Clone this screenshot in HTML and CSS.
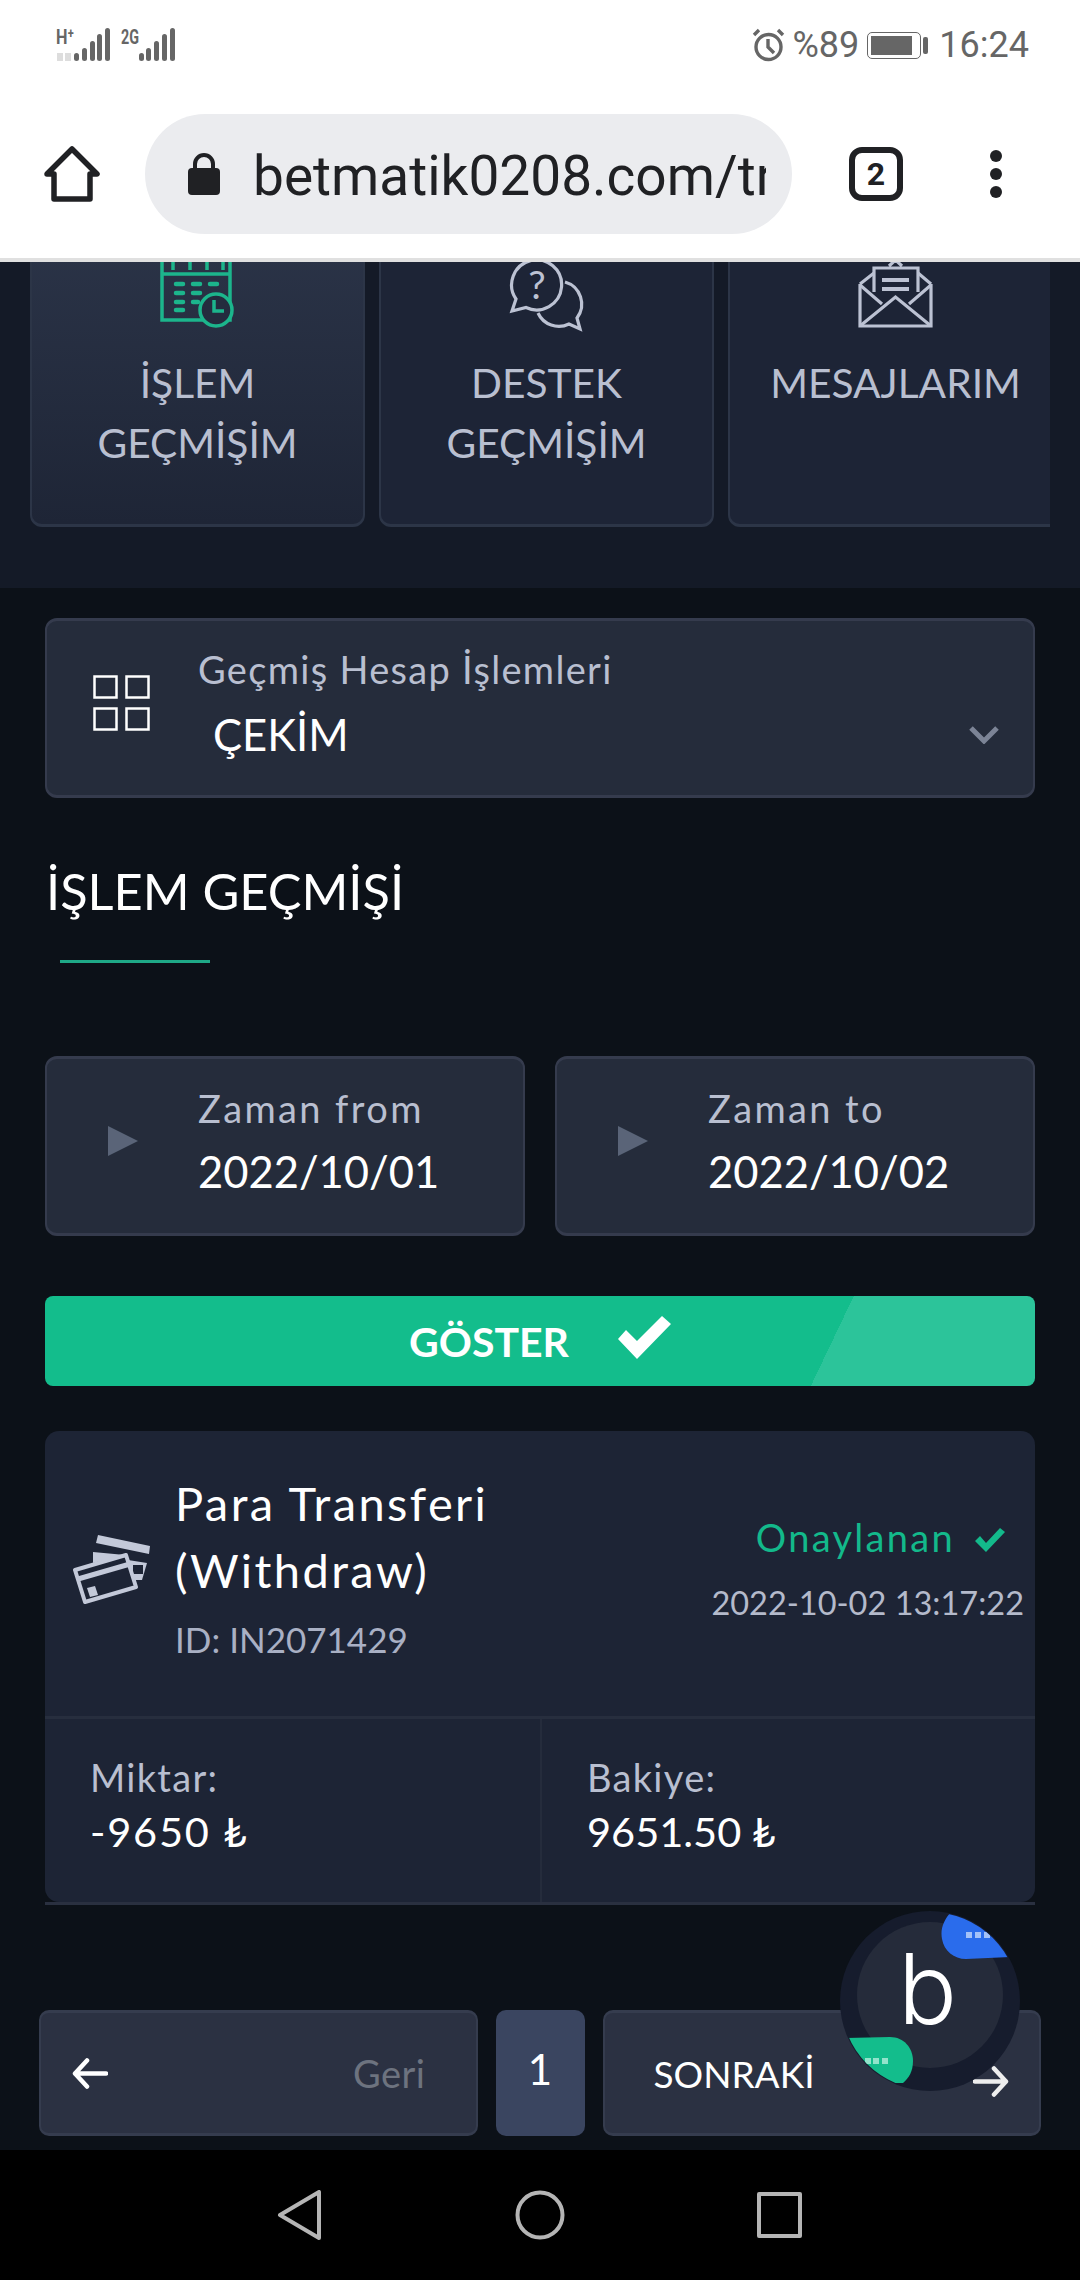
FILE: index.html
```html
<!DOCTYPE html>
<html lang="tr">
<head>
    <meta charset="UTF-8">
    <meta name="viewport" content="width=device-width, initial-scale=1.0">
    <title>İşlem Geçmişi</title>
    <link rel="stylesheet" href="styles.css">
</head>
<body>
    <header class="browser">
        <div class="status-bar">
            <svg class="signal" width="122" height="42" viewBox="0 -6 122 42">
                <text x="0" y="16" class="net-label" textLength="18" lengthAdjust="spacingAndGlyphs">H⁺</text>
                <path d="M1 25h6v8H1zM9 25h6v8H9z" fill="#ddd"/>
                <g fill="#666">
                    <rect x="18" y="25" width="5" height="8" rx="2.5"/>
                    <rect x="26" y="20" width="5" height="13" rx="2.5"/>
                    <rect x="34" y="13" width="5" height="20" rx="2.5"/>
                    <rect x="41" y="6" width="5" height="27" rx="2.5"/>
                    <rect x="49" y="0" width="5" height="33" rx="2.5"/>
                    <rect x="83" y="25" width="5" height="8" rx="2.5"/>
                    <rect x="90" y="20" width="5" height="13" rx="2.5"/>
                    <rect x="98" y="13" width="5" height="20" rx="2.5"/>
                    <rect x="106" y="6" width="5" height="27" rx="2.5"/>
                    <rect x="114" y="0" width="5" height="33" rx="2.5"/>
                </g>
                <text x="65" y="16" class="net-label" textLength="18" lengthAdjust="spacingAndGlyphs">2G</text>
            </svg>
            <div class="status-right">
                <svg width="33" height="34" viewBox="0 0 33 34" fill="none" stroke="#666" stroke-width="3.4">
                    <circle cx="16.5" cy="19" r="12.5"/>
                    <path d="M16 11v8l6 6M2 7l5-5M31 7l-5-5"/>
                </svg>
                <span class="battery-pct">%89</span>
                <span class="battery"><span class="battery-fill"></span></span>
                <span class="battery-tip"></span>
                <span class="clock">16:24</span>
            </div>
        </div>
        <div class="toolbar">
            <svg class="home-icon" width="56" height="56" viewBox="0 0 56 56" fill="none" stroke="#202124" stroke-width="5.5" stroke-linejoin="round">
                <path d="M3 28 28 3l25 25h-7v25H10V28z"/>
            </svg>
            <div class="url-pill">
                <svg width="32" height="42" viewBox="0 0 32 42">
                    <path d="M7 17V11a9 9 0 0 1 18 0v6" fill="none" stroke="#202124" stroke-width="4"/>
                    <rect x="0" y="15" width="32" height="27" rx="4" fill="#202124"/>
                </svg>
                <span class="url-text">betmatik0208.com/tr</span>
            </div>
            <span class="tab-count">2</span>
            <span class="menu-dots"><i></i><i></i><i></i></span>
        </div>
    </header>

    <section class="quick-links">
        <div class="link-strip">
            <a class="link-card active">
                <svg class="link-icon" width="90" height="100" viewBox="0 0 90 100" fill="none" stroke="#1cb58c" stroke-width="3.5">
                    <path d="M9 20H77V88H9z"/>
                    <path d="M9 42H77M20 30v8M37 30v8M54 30v8M70 30v8"/>
                    <path d="M23 52h7M40 52h7M57 52h7M23 61h7M40 61h7M23 70h7M40 70h5M23 78h7" stroke-width="4.5" stroke-linecap="round"/>
                    <circle cx="63" cy="78" r="16" fill="#242c3e"/>
                    <path d="M61 68v11h10"/>
                </svg>
                <span>İŞLEM<br>GEÇMİŞİM</span>
            </a>
            <a class="link-card">
                <svg class="link-icon" width="90" height="100" viewBox="0 0 90 100" fill="none" stroke="#bcc2d3" stroke-width="3.2">
                    <path d="M10 79l4-12A25 25 0 1 1 24 75.500z"/>
                    <path d="M63 50A23 23 0 0 1 75 86l3 11-11-5A23 23 0 0 1 36 81"/>
                    <text x="35" y="67" text-anchor="middle" class="help-mark">?</text>
                </svg>
                <span>DESTEK<br>GEÇMİŞİM</span>
            </a>
            <a class="link-card">
                <svg class="link-icon" width="90" height="100" viewBox="0 0 90 100" fill="none" stroke="#bcc2d3" stroke-width="3.2">
                    <path d="M9 52V94H80V52"/>
                    <path d="M9 52 23 41M80 52 67 41M9 53 31 72M80 53 58 72M9 94 44.500 65 80 94"/>
                    <path d="M23 60V36H67V60M38 34l6.500-6 6.500 6"/>
                    <path d="M31 48H58M31 57H58" stroke-width="4"/>
                </svg>
                <span>MESAJLARIM</span>
            </a>
        </div>
    </section>

    <main class="content">
        <div class="field select-field">
            <svg class="grid-icon" width="57" height="56" viewBox="0 0 57 56" fill="none" stroke="#fff" stroke-width="2.500">
                <rect x="1.500" y="1.500" width="22" height="21"/>
                <rect x="33.500" y="1.500" width="22" height="21"/>
                <rect x="1.500" y="33.500" width="22" height="21"/>
                <rect x="33.500" y="33.500" width="22" height="21"/>
            </svg>
            <div class="field-text">
                <div class="field-label">Geçmiş Hesap İşlemleri</div>
                <div class="field-value select-value">ÇEKİM</div>
            </div>
            <svg class="chevron" width="30" height="18" viewBox="0 0 30 18" fill="none" stroke="#7c8496" stroke-width="5">
                <path d="M2 2l13 13L28 2"/>
            </svg>
        </div>

        <h2 class="page-title">İŞLEM GEÇMİŞİ</h2>
        <div class="title-rule"></div>

        <div class="date-row">
            <div class="field date-field">
                <span class="date-arrow"></span>
                <div class="field-text">
                    <div class="field-label">Zaman from</div>
                    <div class="field-value">2022/10/01</div>
                </div>
            </div>
            <div class="field date-field">
                <span class="date-arrow"></span>
                <div class="field-text">
                    <div class="field-label">Zaman to</div>
                    <div class="field-value">2022/10/02</div>
                </div>
            </div>
        </div>

        <button class="show-btn">
            <span>GÖSTER</span>
            <svg width="53" height="43" viewBox="0 0 53 43" fill="#fff"><path d="M0 23l8-9 11 11L44 0l9 8-34 35z"/></svg>
        </button>

        <article class="tx-wrap">
            <div class="tx">
                <div class="tx-top">
                    <svg class="tx-icon" width="80" height="70" viewBox="0 0 80 70" fill="#c3c9d9">
                        <path d="M26 1 78 12 77 20 24 9z"/>
                        <path d="M21 18 53 21 21 29z"/>
                        <path d="M56 26 75 29 70 46 61 46z"/>
                        <path d="M61 31h10v9H61z" fill="#1d2435"/>
                        <path d="M3 36 54 21 64 53 13 68z" fill="#1d2435" stroke="#c3c9d9" stroke-width="4" stroke-linejoin="round"/>
                        <path d="M6 45 58 30" stroke="#c3c9d9" stroke-width="5"/>
                        <path d="M15 54 23 52 26 61 18 63z"/>
                    </svg>
                    <div class="tx-main">
                        <div class="tx-title">Para Transferi<br>(Withdraw)</div>
                        <div class="tx-id">ID: IN2071429</div>
                    </div>
                    <div class="tx-side">
                        <div class="tx-status">
                            Onaylanan
                            <svg width="30" height="24" viewBox="0 0 30 24" fill="#13b98b"><path d="M0 13l5-5 6 7L25 0l5 4-19 20z"/></svg>
                        </div>
                        <div class="tx-date">2022-10-02 13:17:22</div>
                    </div>
                </div>
                <div class="tx-bottom">
                    <div class="tx-cell">
                        <div class="field-label">Miktar:</div>
                        <div class="field-value amount-neg">-9650 ₺</div>
                    </div>
                    <div class="tx-cell">
                        <div class="field-label">Bakiye:</div>
                        <div class="field-value">9651.50 ₺</div>
                    </div>
                </div>
            </div>
        </article>

        <nav class="pager">
            <a class="pager-btn prev">
                <svg width="36" height="31" viewBox="0 0 36 31" fill="none" stroke="#fff" stroke-width="4.500" stroke-linecap="round" stroke-linejoin="round">
                    <path d="M34 15.500H3M15 2.500 3 15.500 15 28.500"/>
                </svg>
                <span class="pager-off">Geri</span>
            </a>
            <span class="pager-num">1</span>
            <a class="pager-btn next">
                <span>SONRAKİ</span>
                <svg class="next-arrow" width="36" height="31" viewBox="0 0 36 31" fill="none" stroke="#eee" stroke-width="4.500" stroke-linecap="round" stroke-linejoin="round">
                    <path d="M2 15.500H33M21 2.500 33 15.500 21 28.500"/>
                </svg>
            </a>
        </nav>
    </main>

    <footer class="nav-bar">
        <svg width="50" height="50" viewBox="0 0 50 50" fill="none" stroke="#b5b5b5" stroke-width="4" stroke-linejoin="round">
            <path d="M44 2V48L5 25z"/>
        </svg>
        <svg width="50" height="50" viewBox="0 0 50 50" fill="none" stroke="#b5b5b5" stroke-width="4">
            <circle cx="25" cy="25" r="22.500"/>
        </svg>
        <svg width="50" height="50" viewBox="0 0 50 50" fill="none" stroke="#b5b5b5" stroke-width="4" stroke-linejoin="round">
            <rect x="4" y="4" width="41" height="42"/>
        </svg>
    </footer>

    <div class="chat-widget">
        <svg width="180" height="180" viewBox="0 0 180 180">
            <defs>
                <clipPath id="chat-clip"><circle cx="90" cy="90" r="89"/></clipPath>
            </defs>
            <circle cx="90" cy="90" r="90" fill="#161c2d"/>
            <circle cx="90" cy="84" r="73" fill="#252b3a"/>
            <g clip-path="url(#chat-clip)">
                <path d="M112 0C104 8 100 18 102 28 104 40 114 48 126 48L170 46V0z" fill="#2a6cec"/>
                <path d="M0 127 50 126C64 126 73 137 73 150 73 160 69 167 63 172L0 172z" fill="#13bd8c"/>
                <path d="M126 21h6v6h-6zM135 21h6v6h-6zM144 21h6v6h-6z" fill="#a3c1f8"/>
                <path d="M25 147h6v6h-6zM33 147h6v6h-6zM42 147h6v6h-6z" fill="#92e3cb"/>
            </g>
        </svg>
        <span class="chat-letter">b</span>
    </div>
</body>
</html>
```

FILE: styles.css
```css
* {
    box-sizing: border-box;
}

html, body {
    margin: 0;
    height: 2280px;
    overflow: hidden;
}

body {
    position: relative;
    width: 1080px;
    font-family: "Lato", "Noto Sans", sans-serif;
    background: #0c1118;
    color: #fff;
}

/* browser chrome */
.browser {
    background: #fff;
    border-bottom: 4px solid #e0e0e0;
    font-family: "Roboto", sans-serif;
}

.status-bar {
    height: 90px;
    display: flex;
    justify-content: space-between;
    align-items: center;
    padding: 0 51px 0 56px;
    color: #666;
}

.signal {
    margin-top: -5px;
}

.net-label {
    font-family: "Roboto", sans-serif;
    font-size: 21px;
    font-weight: 700;
    fill: #666;
}

.status-right {
    display: flex;
    align-items: center;
}

.battery-pct {
    font-size: 36px;
    margin-left: 8px;
}

.battery {
    width: 54px;
    height: 27px;
    margin-left: 8px;
    padding: 3px;
    border: 1px solid #666;
    border-radius: 5px;
    display: block;
}

.battery-fill {
    display: block;
    width: 41px;
    height: 100%;
    background: #666;
}

.battery-tip {
    width: 5px;
    height: 17px;
    margin-left: 2px;
    background: #666;
    border-radius: 2px;
}

.clock {
    font-size: 36px;
    margin-left: 11px;
}

.toolbar {
    height: 168px;
    display: flex;
    align-items: center;
    padding-left: 44px;
}

.home-icon {
    flex: none;
    margin-right: 45px;
}

.url-pill {
    flex: none;
    width: 647px;
    height: 120px;
    padding: 0 26px 0 43px;
    display: flex;
    align-items: center;
    gap: 33px;
    background: #ebecef;
    border-radius: 60px;
}

.url-pill svg {
    flex: none;
}

.url-text {
    font-size: 55px;
    line-height: 70px;
    margin-top: 4px;
    color: #202124;
    white-space: nowrap;
    overflow: hidden;
}

.tab-count {
    flex: none;
    width: 54px;
    height: 54px;
    margin-left: 57px;
    border: 6px solid #202124;
    border-radius: 13px;
    display: flex;
    align-items: center;
    justify-content: center;
    font-size: 32px;
    font-weight: 700;
    color: #202124;
}

.menu-dots {
    margin-left: 87px;
    display: flex;
    flex-direction: column;
    gap: 6px;
}

.menu-dots i {
    display: block;
    width: 12px;
    height: 12px;
    border-radius: 50%;
    background: #202124;
}

/* top cards, cut off by the browser bar because the page is scrolled */
.quick-links {
    height: 326px;
    background: #141a27;
}

.link-strip {
    height: 265px;
    margin: 0 30px;
    display: flex;
    align-items: flex-end;
    gap: 14px;
    overflow: hidden;
}

.link-card {
    flex: none;
    width: 335px;
    height: 300px;
    padding-top: 3px;
    display: flex;
    flex-direction: column;
    align-items: center;
    text-align: center;
    font-size: 40.700px;
    line-height: 60px;
    color: #b9bfd0;
    background: #1d2436;
    border: 2px solid #2c3547;
    border-bottom-width: 3px;
    border-radius: 12px;
}

.link-card.active {
    background: linear-gradient(#2b3448, #1e2536);
}

.link-icon {
    flex: none;
    margin-bottom: 21px;
}

.help-mark {
    font-family: "Lato", sans-serif;
    font-size: 39px;
    fill: #bcc2d3;
    stroke: none;
}

/* main content */
.content {
    height: 1562px;
    padding: 30px 45px 0;
}

.field {
    display: flex;
    align-items: flex-start;
    background: #252c3b;
    border: 2px solid #353b4d;
    border-width: 3px 2px;
    border-radius: 12px;
}

.field-label {
    font-size: 38px;
    line-height: 44px;
    letter-spacing: 1.300px;
    color: #b9bfd0;
}

.field-value {
    font-size: 43.500px;
    line-height: 56px;
    color: #fff;
}

.select-field {
    height: 180px;
    padding: 26px 34px 0 46px;
}

.grid-icon {
    flex: none;
    margin: 28px 48px 0 0;
}

.select-value {
    margin: 15px 0 0 15px;
}

.chevron {
    flex: none;
    margin: 79px 0 0 auto;
}

.page-title {
    margin: 63px 0 0 1px;
    font-size: 50.500px;
    line-height: 60px;
    font-weight: 400;
}

.title-rule {
    width: 150px;
    height: 3px;
    margin: 39px 0 0 15px;
    background: #1fa987;
}

.date-row {
    display: grid;
    grid-template-columns: 1fr 1fr;
    gap: 30px;
    margin-top: 93px;
}

.date-field {
    height: 180px;
    padding: 27px 0 0 61px;
}

.date-arrow {
    flex: none;
    margin: 40px 60px 0 0;
    border-left: 30px solid #5a6478;
    border-top: 15px solid transparent;
    border-bottom: 15px solid transparent;
}

.date-field .field-label {
    letter-spacing: 2.400px;
}

.date-field .field-value {
    margin-top: 13px;
}

.show-btn {
    width: 100%;
    height: 90px;
    margin-top: 60px;
    padding-top: 2px;
    display: flex;
    align-items: center;
    justify-content: center;
    gap: 49px;
    border: 0;
    border-radius: 8px;
    background: linear-gradient(115.5deg, #13bd8c 730px, #2cc49a 730px);
    font-family: inherit;
    font-size: 41px;
    font-weight: 700;
    color: #fff;
}

.show-btn svg {
    margin-top: -9px;
}

/* transaction card */
.tx-wrap {
    height: 474px;
    margin-top: 45px;
    border-bottom: 3px solid #2a3040;
}

.tx {
    height: 100%;
    background: #1d2435;
    border-radius: 14px;
    overflow: hidden;
}

.tx-top {
    height: 288px;
    display: flex;
    border-bottom: 3px solid #272e3e;
}

.tx-icon {
    flex: none;
    margin: 103px 23px 0 27px;
}

.tx-main {
    padding-top: 39px;
}

.tx-title {
    font-size: 47px;
    line-height: 67px;
    letter-spacing: 2.400px;
}

.tx-id {
    margin-top: 13px;
    font-size: 35px;
    line-height: 44px;
    color: #a9b0c4;
}

.tx-side {
    margin-left: auto;
    padding: 84px 11px 0 0;
    text-align: right;
}

.tx-status {
    padding-right: 19px;
    font-size: 38px;
    line-height: 44px;
    letter-spacing: 2.300px;
    color: #13b98b;
}

.tx-status svg {
    margin-left: 8px;
}

.tx-date {
    margin-top: 24px;
    font-size: 32.500px;
    line-height: 40px;
    color: #b4bacb;
}

.tx-bottom {
    display: grid;
    grid-template-columns: 497px 1fr;
    height: 183px;
}

.tx-cell {
    padding: 36px 0 0 45px;
}

.tx-cell:first-child {
    border-right: 2px solid #252c3c;
}

.tx-cell .field-value {
    margin-top: 5px;
    font-size: 41.500px;
    line-height: 54px;
}

.tx-cell .amount-neg {
    letter-spacing: 1.800px;
}

/* pagination */
.pager {
    display: grid;
    grid-template-columns: 1fr 89px 1fr;
    gap: 18px;
    height: 126px;
    margin: 105px -6px 0;
}

.pager-btn {
    display: flex;
    align-items: center;
    justify-content: space-between;
    font-size: 37px;
    background: #2b3142;
    border: 2px solid #353c4e;
    border-width: 3px 2px;
    border-radius: 10px;
}

.pager-btn.prev {
    padding: 0 50px 0 31px;
}

.pager-btn.next {
    padding: 0 30px 0 49px;
}

.pager-off {
    font-size: 38px;
    letter-spacing: 0.500px;
    color: #6d737f;
}

.next-arrow {
    margin-top: 16px;
}

.pager-num {
    display: flex;
    align-items: center;
    justify-content: center;
    padding-bottom: 9px;
    font-size: 42px;
    background: #3a4560;
    border-radius: 10px;
}

/* android nav bar */
.nav-bar {
    height: 130px;
    background: #000;
    display: flex;
    align-items: center;
    justify-content: center;
    gap: 190px;
}

/* floating chat button */
.chat-widget {
    position: absolute;
    left: 840px;
    top: 1911px;
    width: 180px;
    height: 180px;
}

.chat-letter {
    position: absolute;
    left: 58px;
    top: 18px;
    font-family: "Inter", sans-serif;
    font-size: 98px;
    font-weight: 300;
    line-height: 120px;
    color: #fff;
}
```
